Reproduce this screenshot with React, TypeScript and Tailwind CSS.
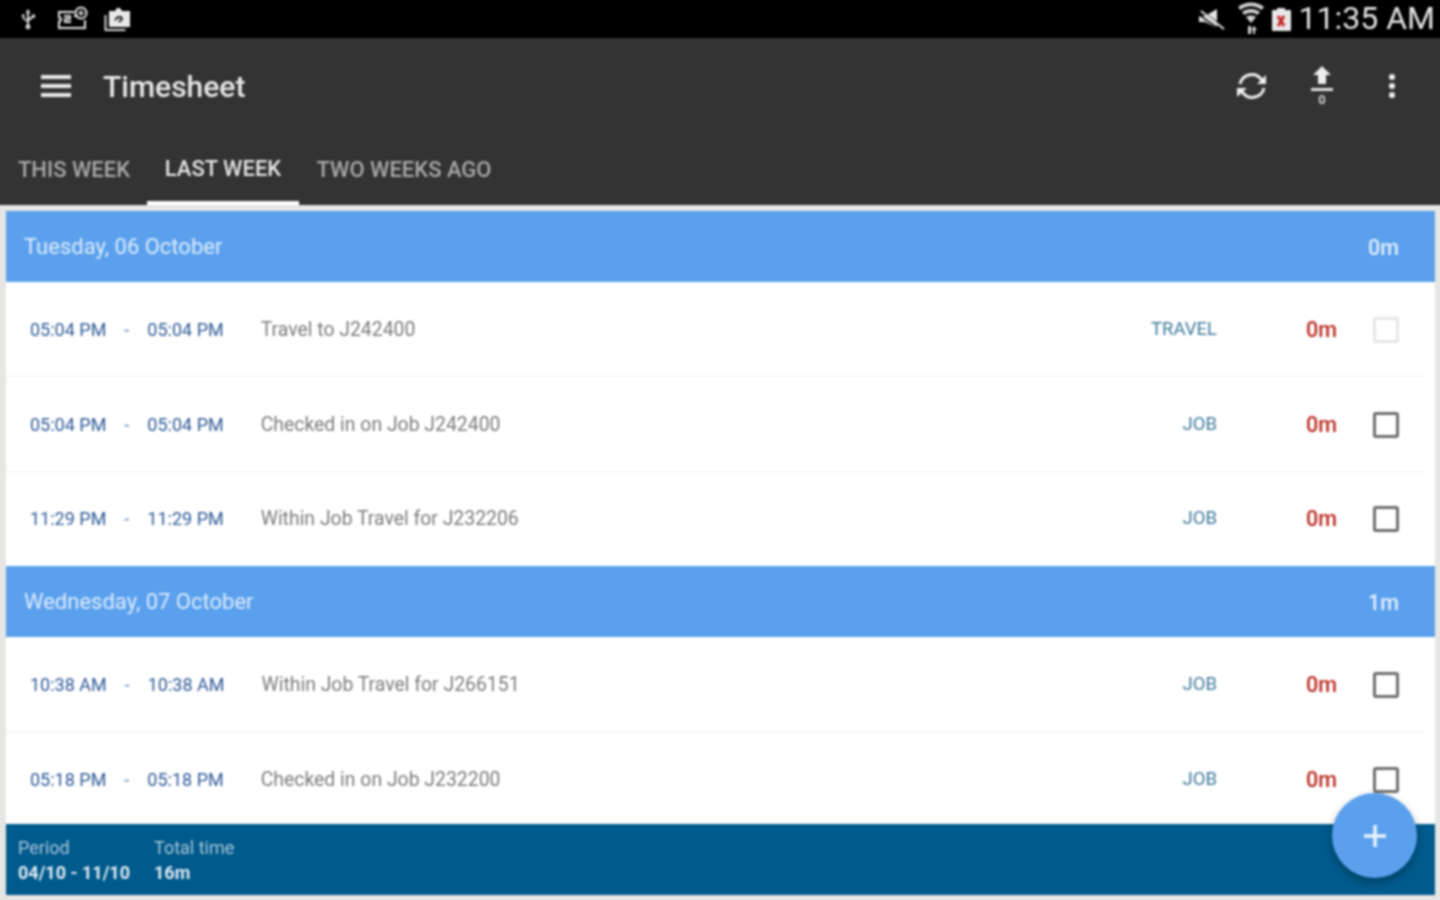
const rowsA = [
  { start: "05:04 PM", end: "05:04 PM", desc: "Travel to J242400", type: "TRAVEL", mins: "0m", h: "h-[95px]", disabled: true },
  { start: "05:04 PM", end: "05:04 PM", desc: "Checked in on Job J242400", type: "JOB", mins: "0m", h: "h-[95px]" },
  { start: "11:29 PM", end: "11:29 PM", desc: "Within Job Travel for J232206", type: "JOB", mins: "0m", h: "h-[94px]" },
];

const rowsB = [
  { start: "10:38 AM", end: "10:38 AM", desc: "Within Job Travel for J266151", type: "JOB", mins: "0m", h: "h-[96px]" },
  { start: "05:18 PM", end: "05:18 PM", desc: "Checked in on Job J232200", type: "JOB", mins: "0m", h: "h-[91px] pt-[2px]" },
];

type RowData = {
  start: string;
  end: string;
  desc: string;
  type: string;
  mins: string;
  h: string;
  disabled?: boolean;
};

function StatusIcons() {
  return (
    <div className="flex items-center pl-[22px]">
      {/* usb */}
      <svg width="18" height="24" viewBox="0 0 18 24" fill="#d8d8d8" className="mr-[20px]">
        <path d="M9 2l2.500 4H10v5l3-2V7.500h3V11h-1.500v-.5L10 14v3.500a2.500 2.500 0 1 1-2 0V15L3.500 11.500V10A1.500 1.500 0 1 1 5 10v.6L8 13V6H6.500z" />
      </svg>
      {/* ticket with plus badge */}
      <svg width="32" height="26" viewBox="0 0 32 26" fill="none" stroke="#e4e4e4" strokeWidth="2" className="mr-[15px]">
        <path d="M17 6H2v5.500a2 2 0 0 1 0 4V22h26v-8" />
        <path d="M7 10h6v3H8v3h6M17 10h4" strokeWidth="1.800" />
        <circle cx="24" cy="7" r="5.500" />
        <path d="M24 4v6M21 7h6" strokeWidth="1.500" />
      </svg>
      {/* clipboard stack */}
      <svg width="28" height="28" viewBox="0 0 28 28" fill="none">
        <path d="M1.500 10v15h20" stroke="#d8d8d8" strokeWidth="2" />
        <path d="M5 6h6l2-3h3l2 3h8v16H5z" fill="#e8e8e8" />
        <path d="M11 15l3-3h3l1 2-3 3" stroke="#222" strokeWidth="2" />
      </svg>
    </div>
  );
}

function StatusRight() {
  return (
    <div className="flex items-center">
      {/* muted speaker */}
      <svg width="28" height="24" viewBox="0 0 28 24" fill="#e4e4e4" className="mr-[11px]">
        <path d="M1 9h6l12-7v19L7 15H1z" />
        <path d="M2 3l24 17M0 7l24 17" stroke="#000" strokeWidth="1.500" />
        <path d="M3 4l23 18" stroke="#e4e4e4" strokeWidth="2" />
      </svg>
      {/* wifi */}
      <svg width="28" height="34" viewBox="0 0 28 34" fill="#d2d2d2" className="mr-[7px]">
        <path d="M1 5c7-6 19-6 26 0l-2.500 3C18 3 10 3 3.500 8z" />
        <path d="M5 10c5-4 13-4 18 0l-2.500 3c-3.500-3-9.500-3-13 0z" />
        <path d="M9 15c3-2 7-2 10 0l-5 6z" />
        <path d="M11 24h3v8h-3zM17 24l3 4h-2v4h-2v-4h-2z" />
      </svg>
      {/* battery */}
      <div className="relative mr-[8px] mt-[3px] flex h-[21px] w-[19px] items-center justify-center rounded-[1px] bg-[#e8e8e8]">
        <div className="absolute -top-[2px] h-[2px] w-[8px] bg-[#e8e8e8]" />
        <svg width="10" height="14" viewBox="0 0 10 14" fill="none" stroke="#c62828" strokeWidth="3">
          <path d="M2 2l6 10M8 2L2 12" />
        </svg>
      </div>
      <span className="-mt-[2px] text-[32px] leading-none text-[#e4e4e4]">11:35 AM</span>
    </div>
  );
}

function Row({ r, last }: { r: RowData; last?: boolean }) {
  return (
    <div className={`relative flex items-center pl-[24px] pr-[36px] ${r.h}`}>
      <div className="flex flex-1 items-center text-[18px] text-[#2f5a96]">
        <span>{r.start}</span>
        <span className="mx-[18px] text-[#5f82b0]">-</span>
        <span>{r.end}</span>
        <span className="ml-[37px] text-[19.400px] text-[#7c7c7c]">{r.desc}</span>
      </div>
      <div className="mr-[89px] text-[18.500px] text-[#3f7a9c]">{r.type}</div>
      <div className="mr-[36px] pt-[1px] text-[21.500px] font-medium text-[#b92a20]">{r.mins}</div>
      <div
        className={`h-[26px] w-[26px] rounded-[3px] border-[3px] bg-white ${
          r.disabled ? "border-[#e6e6e6]" : "border-[#6e6e6e]"
        }`}
      />
      {!last && <div className="absolute bottom-0 left-0 right-[10px] h-px bg-[#f3f3f3]" />}
    </div>
  );
}

function DayHeader({ day, total }: { day: string; total: string }) {
  return (
    <div className="flex h-[71px] items-center justify-between bg-[#5aa0ed] pl-[18px] pr-[36px]">
      <span className="text-[22px] text-[#dcebfb]">{day}</span>
      <span className="pt-[3px] text-[21.500px] font-medium text-[#e6f0fc]">{total}</span>
    </div>
  );
}

export default function App() {
  return (
    <div className="h-[900px] w-[1440px] overflow-hidden" style={{ fontFamily: "Roboto, 'Noto Sans', sans-serif" }}>
      {/* blurred layer runs 3px past the page so its edges stay solid */}
      <div className="relative -m-[3px] flex h-[906px] w-[1446px] flex-col bg-[#e6e6e4] blur-[0.9px]">
        {/* status bar */}
        <div className="flex h-[41px] shrink-0 items-center justify-between bg-black pr-[8px] pt-[3px]">
          <StatusIcons />
          <StatusRight />
        </div>

        {/* app bar */}
        <div className="shrink-0 bg-[#333333]">
          <div className="flex h-[96px] items-center justify-between pl-[44px] pr-[48px]">
            <div className="flex items-center gap-[32px]">
              <div className="flex w-[30px] flex-col gap-[5px]">
                <div className="h-[4px] bg-[#e8e8e8]" />
                <div className="h-[4px] bg-[#e8e8e8]" />
                <div className="h-[4px] bg-[#e8e8e8]" />
              </div>
              <span className="pt-[2px] text-[30px] font-medium leading-none text-[#e8e8e8]">Timesheet</span>
            </div>
            <div className="flex items-center">
              <svg width="34" height="30" viewBox="0 0 34 30" fill="none" stroke="#eeeeee" strokeWidth="3" className="mr-[41px]">
                <path d="M5 13a12 12 0 0 1 21-5l2 3" />
                <path d="M29 17a12 12 0 0 1-21 5l-2-3" />
                <path d="M22 13h9V4z" fill="#eeeeee" stroke="none" />
                <path d="M12 17H2v9z" fill="#eeeeee" stroke="none" />
              </svg>
              <div className="mr-[55px] flex w-[24px] flex-col items-center">
                <svg width="20" height="18" viewBox="0 0 20 18" fill="#eeeeee">
                  <path d="M10 0l9 9h-5v9H6V9H1z" />
                </svg>
                <div className="mt-[4px] h-[3px] w-[22px] bg-[#e0e0e0]" />
                <span className="mt-[2px] text-[13px] font-bold leading-[14px] text-[#cfcfcf]">0</span>
              </div>
              <div className="flex w-[6px] flex-col gap-[3px]">
                <div className="h-[6px] w-[6px] rounded-full bg-[#eeeeee]" />
                <div className="h-[6px] w-[6px] rounded-full bg-[#eeeeee]" />
                <div className="h-[6px] w-[6px] rounded-full bg-[#eeeeee]" />
              </div>
            </div>
          </div>
          <div className="flex h-[71px] items-stretch pl-[4px] text-[22px] font-medium">
            <div className="flex w-[146px] items-center justify-center text-[#a8a8a8]">THIS WEEK</div>
            <div className="flex w-[152px] items-center justify-center border-b-[4px] border-white pt-[2px] text-[#e4e4e4]">
              LAST WEEK
            </div>
            <div className="flex w-[210px] items-center justify-center text-[#a8a8a8]">TWO WEEKS AGO</div>
          </div>
        </div>

        {/* list */}
        <div className="ml-[9px] mr-[8px] mt-[6px] flex flex-col bg-white">
          <DayHeader day="Tuesday, 06 October" total="0m" />
          {rowsA.map((r, i) => (
            <Row key={i} r={r} last={i === rowsA.length - 1} />
          ))}
          <DayHeader day="Wednesday, 07 October" total="1m" />
          {rowsB.map((r, i) => (
            <Row key={i} r={r} last={i === rowsB.length - 1} />
          ))}
          {/* period footer */}
          <div className="flex h-[71px] items-center gap-[24px] bg-[#005a8c] pl-[12px] pt-[2px]">
            <div className="flex flex-col gap-[3px]">
              <span className="text-[18px] leading-[22px] text-[#a9c5d8]">Period</span>
              <span className="text-[18px] font-bold leading-[22px] text-[#e0eaf1]">04/10 - 11/10</span>
            </div>
            <div className="flex flex-col gap-[3px]">
              <span className="text-[18px] leading-[22px] text-[#a9c5d8]">Total time</span>
              <span className="text-[18px] font-bold leading-[22px] text-[#e0eaf1]">16m</span>
            </div>
          </div>
        </div>

        {/* add button */}
        <div className="absolute left-[1335px] top-[796px] flex h-[85px] w-[85px] items-center justify-center rounded-full bg-[#5aa0ed] shadow-[0_4px_8px_rgba(0,0,0,0.3)]">
          <svg width="24" height="24" viewBox="0 0 24 24" stroke="#eaf3fd" strokeWidth="3.500">
            <path d="M12 1v22M1 12h22" />
          </svg>
        </div>
      </div>
    </div>
  );
}
